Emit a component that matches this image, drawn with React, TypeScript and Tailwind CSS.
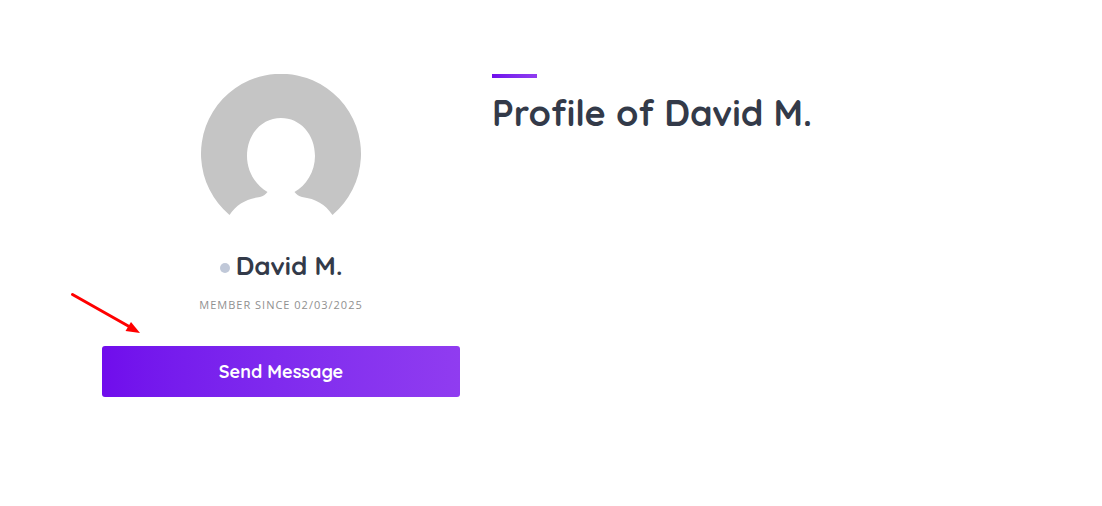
function Avatar() {
  return (
    <svg viewBox="0 0 160 160" className="size-40" role="img" aria-label="David M.">
      <path
        fill="#c5c5c5"
        d="M28.5 141 A80 80 0 1 1 131.5 141 C124 130 115 125 101 123 C98 122.500 95.500 120.500 93.500 118 C105 111.500 114 98 114 82 C114 60 99 44 80 44 C61 44 46 60 46 82 C46 98 55 111.500 66.500 118 C64.500 120.500 62 122.500 59 123 C45 125 36 130 28.500 141 Z"
      />
    </svg>
  );
}

function Arrow() {
  return (
    <svg
      viewBox="0 0 72 44"
      className="pointer-events-none absolute -left-8 -top-14 h-11 w-[72px]"
      aria-hidden="true"
    >
      <path d="M2.500 4.500 L60 37" stroke="#ff0000" strokeWidth="3" strokeLinecap="round" />
      <path d="M70 43 L55.500 41 L61 32 Z" fill="#ff0000" />
    </svg>
  );
}

export default function App() {
  return (
    <main className="min-h-screen bg-white px-6 py-[74px] font-['Quicksand','Lato',sans-serif] text-[#333a49] md:px-[102px]">
      <div className="grid gap-8 md:grid-cols-[358px_1fr]">
        <aside className="flex flex-col items-center">
          <Avatar />
          <div className="mt-4 flex items-center gap-1.5">
            <span className="mt-1 size-[10px] rounded-full bg-[#c0c8d8]" />
            <h2 className="text-[26px] leading-8 font-bold">David M.</h2>
          </div>
          <p className="mt-3 font-['Open_Sans',sans-serif] text-[11px] leading-[22px] tracking-[1px] text-[#909090] uppercase">
            Member since 02/03/2025
          </p>
          <div className="relative mt-[30px] w-full">
            <button
              type="button"
              className="h-[51px] w-full cursor-pointer rounded-[3px] bg-linear-to-r from-[#700cec] to-[#903cf0] text-lg font-bold text-white"
            >
              Send Message
            </button>
            <Arrow />
          </div>
        </aside>
        <section>
          <div className="h-1 w-[45px] bg-linear-to-r from-[#700cec] to-[#903cf0]" />
          <h1 className="mt-3 text-4xl leading-[46px] font-bold">Profile of David M.</h1>
        </section>
      </div>
    </main>
  );
}
